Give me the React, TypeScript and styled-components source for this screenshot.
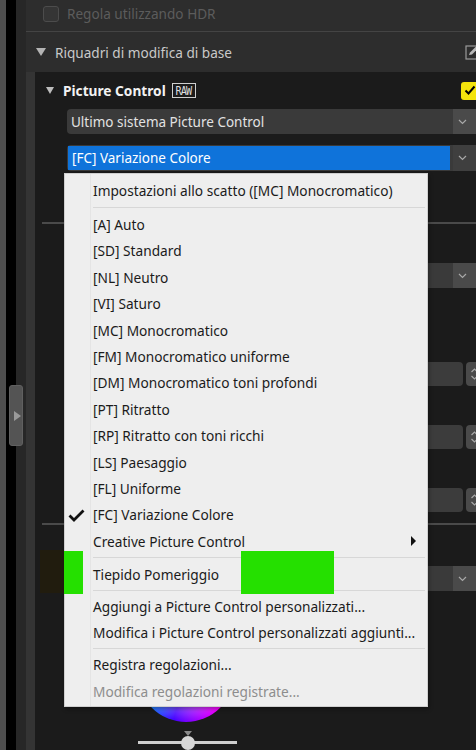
import styled, { createGlobalStyle } from 'styled-components'

const GlobalStyle = createGlobalStyle`
  html, body {
    margin: 0;
    padding: 0;
    background: #1b1b1b;
  }
  body {
    font-family: 'Noto Sans', 'Open Sans', sans-serif;
  }
`

const Frame = styled.div`
  position: relative;
  width: 476px;
  height: 750px;
  overflow: hidden;
  display: flex;
  background: #1b1b1b;
`

const Rail = styled.div`
  position: relative;
  display: flex;
  flex: none;
  .edge {
    width: 6px;
    background: #4e4e4e;
  }
  .black {
    width: 10px;
    background: #000;
  }
  .dark {
    width: 10px;
    background: #272727;
  }
`

const RailHandle = styled.div`
  position: absolute;
  left: 9px;
  top: 385px;
  width: 14px;
  height: 61px;
  box-sizing: border-box;
  background: #545454;
  border: 1px solid #606060;
  border-radius: 3px;
  display: flex;
  align-items: center;
  justify-content: center;
  &::after {
    content: '';
    border-left: 7px solid #9a9a9a;
    border-top: 5px solid transparent;
    border-bottom: 5px solid transparent;
    margin-left: 2px;
  }
`

const Main = styled.div`
  flex: 1;
  min-width: 0;
  display: flex;
  flex-direction: column;
`

const HdrRow = styled.div`
  height: 32px;
  box-sizing: border-box;
  background: #2d2d2d;
  border-bottom: 1px solid #444;
  display: flex;
  align-items: center;
  padding: 0 0 4px 17px;
  gap: 8px;
  color: #5c5c5c;
  font-size: 13.6px;
  .box {
    width: 16px;
    height: 16px;
    box-sizing: border-box;
    border: 1px solid #4c4c4c;
    background: #353535;
    border-radius: 3px;
  }
`

const SectionHeader = styled.div`
  height: 40px;
  background: #2d2d2d;
  display: flex;
  align-items: center;
  padding-left: 10px;
  color: #c9c9c9;
  font-size: 13.6px;
  .title {
    flex: 1;
    margin-left: 9px;
  }
`

const Tri = styled.span<{ size?: number; color?: string }>`
  width: 0;
  height: 0;
  border-left: ${({ size }) => (size || 10) / 2}px solid transparent;
  border-right: ${({ size }) => (size || 10) / 2}px solid transparent;
  border-top: ${({ size }) => ((size || 10) * 0.8).toFixed(1)}px solid ${({ color }) => color || '#b4b4b4'};
`

const SectionBody = styled.div`
  flex: 1;
  display: flex;
  background: #343434;
  padding-left: 9px;
`

const Panel = styled.div`
  flex: 1;
  background: #1b1b1b;
  display: flex;
  flex-direction: column;
`

const PanelHeader = styled.div`
  height: 37px;
  display: flex;
  align-items: center;
  padding-left: 11px;
  color: #f2f2f2;
  font-size: 13.7px;
  font-weight: 700;
  .title {
    margin-left: 9px;
  }
  .raw {
    margin-left: 6px;
    width: 24px;
    height: 15px;
    box-sizing: border-box;
    border: 1px solid #cfcfcf;
    display: flex;
    align-items: center;
    justify-content: center;
    font-size: 12px;
    font-weight: 400;
    letter-spacing: -1px;
    color: #dcdcdc;
    font-family: 'DejaVu Sans Mono', monospace;
  }
  .raw span {
    display: inline-block;
    transform: scaleX(0.85);
  }
  .spacer {
    flex: 1;
  }
`

const YellowCheck = styled.div`
  width: 18px;
  height: 18px;
  margin-right: -3px;
  background: #f3e30c;
  border-radius: 3px;
  display: flex;
  align-items: center;
  justify-content: center;
`

const Select = styled.div<{ active?: boolean; top: number; left?: number; right?: number }>`
  margin: ${({ top }) => top}px ${({ right }) => right ?? -4}px 0 ${({ left }) => left ?? 32}px;
  height: ${({ active }) => (active ? 26 : 25)}px;
  display: flex;
  background: #3a3a3a;
  border-radius: 4px;
  overflow: hidden;
  font-size: 13.5px;
  .value {
    flex: 1;
    display: flex;
    align-items: center;
    padding-left: 4px;
    margin: ${({ active }) => (active ? '1px 3px 1px 1px' : '0')};
    color: ${({ active }) => (active ? '#fff' : '#e2e2e2')};
    background: ${({ active }) => (active ? '#0f73da' : 'transparent')};
    white-space: nowrap;
  }
  .chev {
    width: 22px;
    flex: none;
    background: ${({ active }) => (active ? '#3f3f3f' : '#4a4a4a')};
    display: flex;
    align-items: center;
    padding-left: 5px;
  }
`

const Rule = styled.div<{ top: number }>`
  margin: ${({ top }) => top}px 0 0 7px;
  height: 2px;
  background: #4a4a4a;
`

const SpinRow = styled.div<{ top: number }>`
  margin-top: ${({ top }) => top}px;
  height: 24px;
  display: flex;
  justify-content: flex-end;
  gap: 3px;
  margin-right: -6px;
  .field {
    width: 130px;
    background: #3c3c3c;
    border-radius: 4px;
  }
  .spin {
    width: 16px;
    background: #4a4a4a;
    border-radius: 4px;
    display: flex;
    flex-direction: column;
    align-items: center;
    justify-content: center;
  }
`

const SwatchRow = styled.div`
  margin-top: 25px;
  height: 43px;
  display: flex;
  .swatch {
    width: 24px;
    margin-left: 5px;
    background: #211c0e;
  }
  .sel {
    flex: 1;
  }
`

const Wheel = styled.div`
  margin: 33px 0 0 103px;
  width: 96px;
  height: 96px;
  border-radius: 50%;
  background: radial-gradient(circle, rgba(255, 255, 255, 0.9) 0%, rgba(255, 255, 255, 0) 70%),
    conic-gradient(#bfff00 0deg, #ff0000 75deg, #ff00ff 135deg, #4400ff 195deg, #00ffff 255deg, #00ff00 315deg, #bfff00 360deg);
`

const Slider = styled.div`
  margin: 9px 0 0 103px;
  width: 99px;
  display: flex;
  flex-direction: column;
  align-items: center;
  .mark {
    border-left: 4px solid transparent;
    border-right: 4px solid transparent;
    border-top: 5px solid #8a8a8a;
  }
  .track {
    margin-top: 5px;
    width: 100%;
    height: 3px;
    background: #cfcfcf;
    display: flex;
    justify-content: center;
    align-items: center;
  }
  .knob {
    width: 14px;
    height: 14px;
    border-radius: 50%;
    background: #d6d6d6;
    flex: none;
  }
`

const Menu = styled.div`
  position: absolute;
  left: 64px;
  top: 173px;
  width: 364px;
  box-sizing: border-box;
  padding: 3px 0 2px;
  background: #eeeeee;
  border: 1px solid #cfcfcf;
  box-shadow: 1px 2px 4px rgba(0, 0, 0, 0.35);
  font-family: 'Noto Sans', 'Open Sans', sans-serif;
  font-size: 13.7px;
  color: #1b1b1b;
  &::before {
    content: '';
    position: absolute;
    left: 25px;
    top: 0;
    bottom: 0;
    width: 1px;
    background: #e4e4e4;
  }
`

const Item = styled.div<{ disabled?: boolean }>`
  position: relative;
  height: 26.4px;
  display: flex;
  align-items: center;
  padding-left: 28px;
  white-space: nowrap;
  color: ${({ disabled }) => (disabled ? '#8d8d8d' : '#1b1b1b')};
  .check {
    position: absolute;
    left: 3px;
    top: 7px;
  }
  .sub {
    position: absolute;
    right: 11px;
    top: 8px;
    border-left: 5px solid #111;
    border-top: 5px solid transparent;
    border-bottom: 5px solid transparent;
  }
`

const Sep = styled.div<{ h?: number }>`
  height: ${({ h }) => h || 7}px;
  display: flex;
  align-items: center;
  padding: 0 2px 0 28px;
  &::after {
    content: '';
    flex: 1;
    height: 1px;
    background: #d7d7d7;
  }
`

const Censor = styled.div<{ left: number; width: number }>`
  position: absolute;
  top: 551px;
  height: 43px;
  left: ${({ left }) => left}px;
  width: ${({ width }) => width}px;
  background: #25e000;
`

const Chevron = () => (
  <svg width='9' height='6' viewBox='0 0 9 6'>
    <path d='M1 1 L4.5 4.5 L8 1' fill='none' stroke='#a8a8a8' strokeWidth='1.2' />
  </svg>
)

const SpinArrows = () => (
  <svg width='9' height='16' viewBox='0 0 9 16'>
    <path d='M1.5 6 L4.5 3 L7.5 6 M1.5 10 L4.5 13 L7.5 10' fill='none' stroke='#a8a8a8' strokeWidth='1.2' />
  </svg>
)

const menuItems = [
  '[A] Auto',
  '[SD] Standard',
  '[NL] Neutro',
  '[VI] Saturo',
  '[MC] Monocromatico',
  '[FM] Monocromatico uniforme',
  '[DM] Monocromatico toni profondi',
  '[PT] Ritratto',
  '[RP] Ritratto con toni ricchi',
  '[LS] Paesaggio',
  '[FL] Uniforme',
  '[FC] Variazione Colore',
]

export default function App() {
  return (
    <>
      <GlobalStyle />
      <Frame>
        <Rail>
          <div className='edge' />
          <div className='black' />
          <div className='dark' />
          <RailHandle />
        </Rail>
        <Main>
          <HdrRow>
            <div className='box' />
            <span>Regola utilizzando HDR</span>
          </HdrRow>
          <SectionHeader>
            <Tri />
            <span className='title'>Riquadri di modifica di base</span>
            <svg width='16' height='17' viewBox='0 0 16 17' style={{ marginRight: -5 }}>
              <rect x='1' y='2' width='13' height='13' fill='none' stroke='#9a9a9a' strokeWidth='1.2' />
              <path d='M4 11 L5 8.5 L11 2.5 L13 4.5 L7 10.5 Z' fill='#b8b8b8' />
            </svg>
          </SectionHeader>
          <SectionBody>
            <Panel>
              <PanelHeader>
                <Tri size={9} color='#bdbdbd' />
                <span className='title'>Picture Control</span>
                <span className='raw'>
                  <span>RAW</span>
                </span>
                <span className='spacer' />
                <YellowCheck>
                  <svg width='12' height='11' viewBox='0 0 12 11'>
                    <path d='M1.5 5.5 L4.5 8.5 L10.5 1.5' fill='none' stroke='#000' strokeWidth='2' />
                  </svg>
                </YellowCheck>
              </PanelHeader>
              <Select top={0}>
                <span className='value'>Ultimo sistema Picture Control</span>
                <span className='chev'>
                  <Chevron />
                </span>
              </Select>
              <Select top={11} active>
                <span className='value'>[FC] Variazione Colore</span>
                <span className='chev'>
                  <Chevron />
                </span>
              </Select>
              <Rule top={51} />
              <Select top={39}>
                <span className='value' />
                <span className='chev'>
                  <Chevron />
                </span>
              </Select>
              <SpinRow top={74}>
                <div className='field' />
                <div className='spin'>
                  <SpinArrows />
                </div>
              </SpinRow>
              <SpinRow top={39}>
                <div className='field' />
                <div className='spin'>
                  <SpinArrows />
                </div>
              </SpinRow>
              <SpinRow top={39}>
                <div className='field' />
                <div className='spin'>
                  <SpinArrows />
                </div>
              </SpinRow>
              <Rule top={11} />
              <SwatchRow>
                <div className='swatch' />
                <div className='sel'>
                  <Select top={16} left={3}>
                    <span className='value' />
                    <span className='chev'>
                      <Chevron />
                    </span>
                  </Select>
                </div>
              </SwatchRow>
              <Wheel />
              <Slider>
                <div className='mark' />
                <div className='track'>
                  <div className='knob' />
                </div>
              </Slider>
            </Panel>
          </SectionBody>
        </Main>

        <Menu>
          <Item>Impostazioni allo scatto ([MC] Monocromatico)</Item>
          <Sep h={8} />
          {menuItems.map((label, i) => (
            <Item key={label}>
              {i === menuItems.length - 1 && (
                <svg className='check' width='17' height='13' viewBox='0 0 17 13'>
                  <path d='M1.5 6.5 L6 11 L15.5 1.5' fill='none' stroke='#111' strokeWidth='2.8' />
                </svg>
              )}
              {label}
            </Item>
          ))}
          <Item>
            Creative Picture Control
            <span className='sub' />
          </Item>
          <Sep h={7} />
          <Item>Tiepido Pomeriggio</Item>
          <Sep h={5} />
          <Item>Aggiungi a Picture Control personalizzati...</Item>
          <Item>Modifica i Picture Control personalizzati aggiunti...</Item>
          <Sep h={6} />
          <Item>Registra regolazioni...</Item>
          <Item disabled>Modifica regolazioni registrate...</Item>
        </Menu>

        <Censor left={64} width={19} />
        <Censor left={241} width={93} />
      </Frame>
    </>
  )
}
